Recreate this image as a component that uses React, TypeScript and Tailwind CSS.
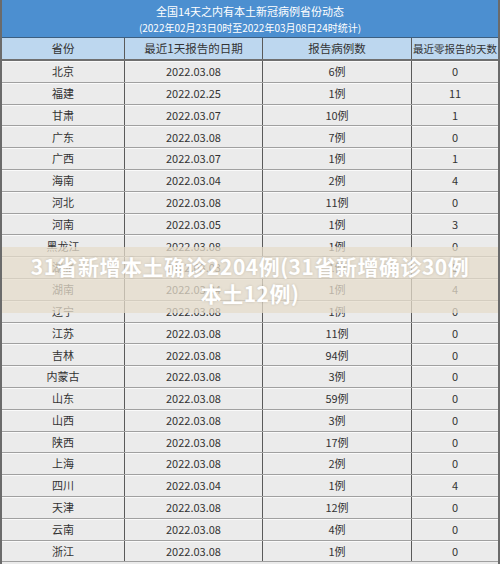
import React from 'react';

const rows: [string, string, string, string][] = [
  ['北京', '2022.03.08', '6例', '0'],
  ['福建', '2022.02.25', '1例', '11'],
  ['甘肃', '2022.03.07', '10例', '1'],
  ['广东', '2022.03.08', '7例', '0'],
  ['广西', '2022.03.07', '1例', '1'],
  ['海南', '2022.03.04', '2例', '4'],
  ['河北', '2022.03.08', '11例', '0'],
  ['河南', '2022.03.05', '1例', '3'],
  ['黑龙江', '2022.03.08', '1例', '0'],
  ['湖北', '2022.03.03', '1例', '5'],
  ['湖南', '2022.03.04', '1例', '4'],
  ['辽宁', '2022.03.08', '1例', '0'],
  ['江苏', '2022.03.08', '11例', '0'],
  ['吉林', '2022.03.08', '94例', '0'],
  ['内蒙古', '2022.03.08', '3例', '0'],
  ['山东', '2022.03.08', '59例', '0'],
  ['山西', '2022.03.08', '3例', '0'],
  ['陕西', '2022.03.08', '17例', '0'],
  ['上海', '2022.03.08', '2例', '0'],
  ['四川', '2022.03.04', '1例', '4'],
  ['天津', '2022.03.08', '12例', '0'],
  ['云南', '2022.03.08', '4例', '0'],
  ['浙江', '2022.03.08', '1例', '0'],
];

const cols = 'grid grid-cols-[123px_138px_149px_1fr]';
const cell = 'flex items-center justify-center whitespace-nowrap border-r border-[#5a5a5a] last:border-r-0';

export default function App() {
  return (
    <div
      className="relative w-[500px] h-[564px] overflow-hidden bg-[#ebebeb] border-x-2 border-[#6b6b6b] text-[#333] text-[11px]"
      style={{ fontFamily: '"Microsoft YaHei", "Noto Sans CJK SC", sans-serif' }}
    >
      <header className="h-[38px] bg-[#4c8fd0] text-white flex flex-col items-center border-b border-[#3d5f80]">
        <div className="text-[11px] leading-[14px] mt-[4px]">全国14天之内有本土新冠病例省份动态</div>
        <div className="text-[10px] leading-[14px] mt-[3px]">(2022年02月23日0时至2022年03月08日24时统计)</div>
      </header>

      <div className={`${cols} h-[23px] bg-[#bdd7ef] border-b-2 border-[#6f6f6f] text-[11.5px]`}>
        <div className={cell}>省份</div>
        <div className={cell}>最近1天报告的日期</div>
        <div className={cell}>报告病例数</div>
        <div className={`${cell} text-[10.5px]`}>最近零报告的天数</div>
      </div>

      {rows.map((r) => (
        <div key={r[0]} className={`${cols} h-[21.8px] border-b border-[#a0a0a0] shadow-[inset_0_1px_0_#fafafa]`}>
          <div className={cell}>{r[0]}</div>
          <div className={cell}>{r[1]}</div>
          <div className={cell}>{r[2]}</div>
          <div className={cell}>{r[3]}</div>
        </div>
      ))}

      <div className="absolute left-0 right-0 top-[247px] h-[66px] bg-[#e6dccb]/75 flex flex-col items-center justify-center">
        <div className="text-white font-bold text-[21px] leading-[27px] tracking-[0.5px] [text-shadow:0_0_3px_rgba(0,0,0,0.15)]">
          31省新增本土确诊2204例(31省新增确诊30例
        </div>
        <div className="text-white font-bold text-[21px] leading-[27px] tracking-[0.5px] [text-shadow:0_0_3px_rgba(0,0,0,0.15)]">
          本土12例)
        </div>
      </div>
    </div>
  );
}
